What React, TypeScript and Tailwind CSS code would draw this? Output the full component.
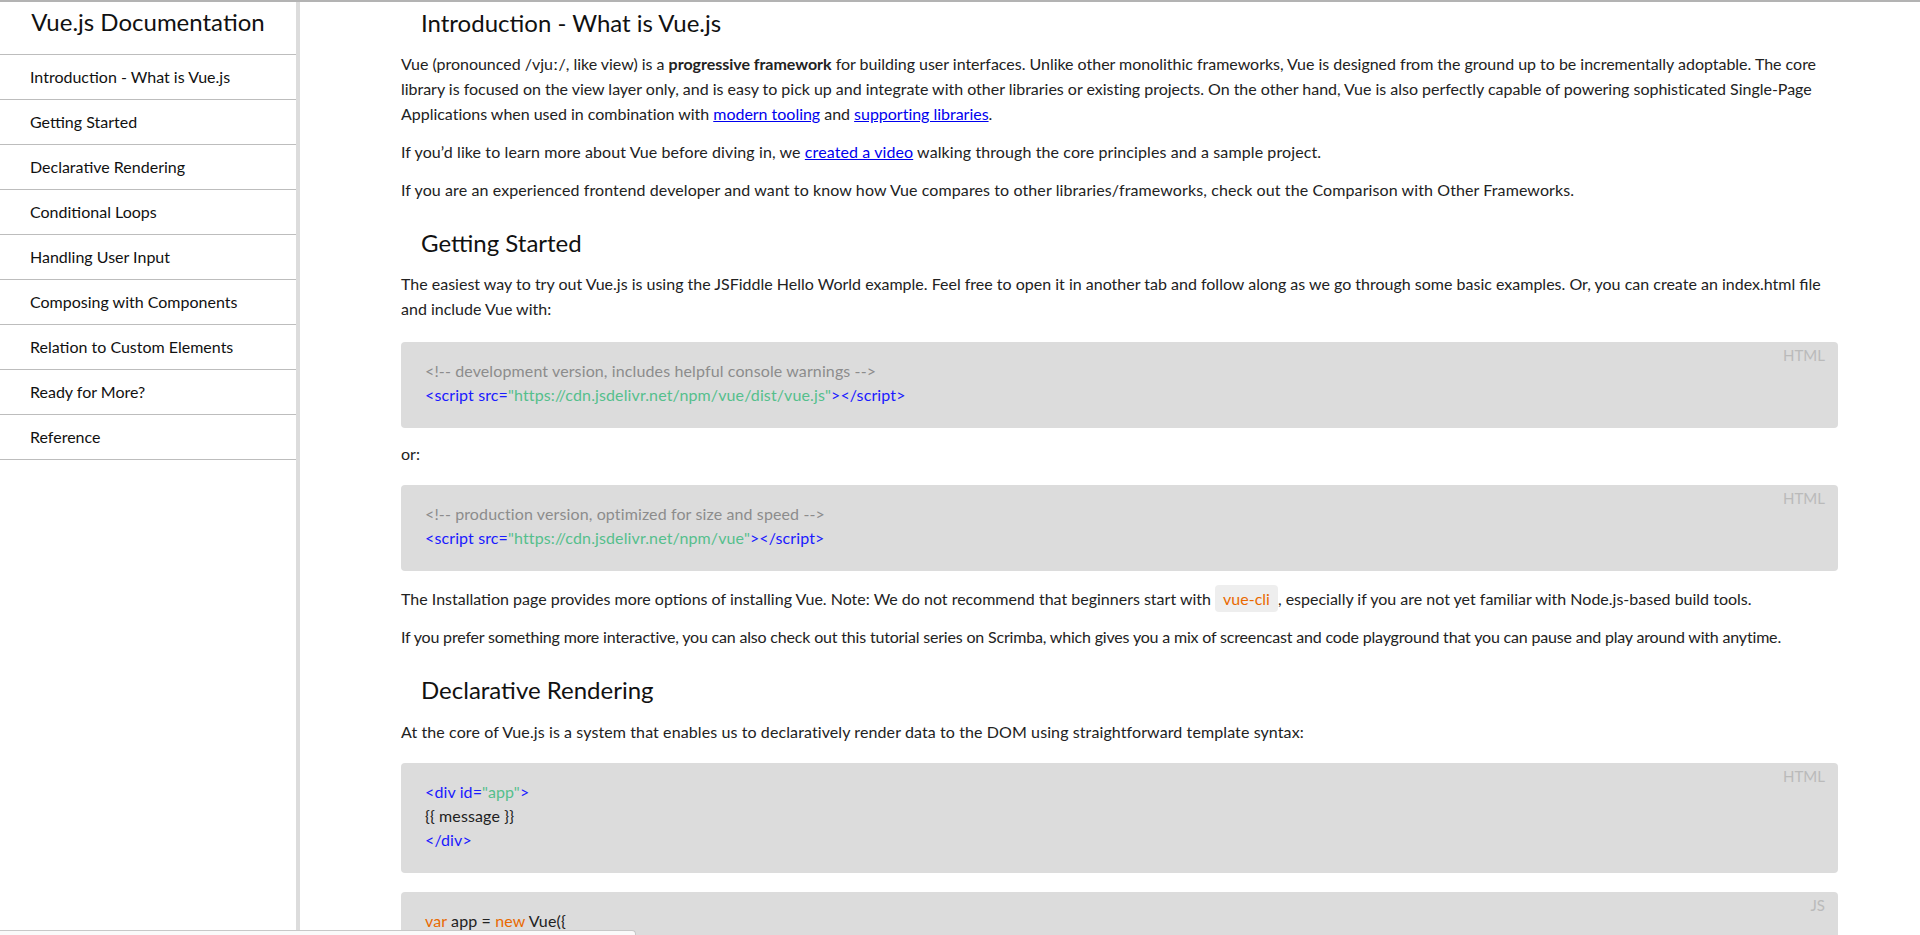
import React from 'react';

const navItems = [
  'Introduction - What is Vue.js',
  'Getting Started',
  'Declarative Rendering',
  'Conditional Loops',
  'Handling User Input',
  'Composing with Components',
  'Relation to Custom Elements',
  'Ready for More?',
  'Reference',
];

const font = { fontFamily: 'Lato, "Open Sans", sans-serif' };

function Tag({ children }: { children: React.ReactNode }) {
  return <span className="text-[#1a1aff]">{children}</span>;
}

function Str({ children }: { children: React.ReactNode }) {
  return <span className="text-[#55bf8c]">{children}</span>;
}

function Kw({ children }: { children: React.ReactNode }) {
  return <span className="text-[#e96900]">{children}</span>;
}

function CodeBlock({ lang, className = '', children }: { lang: string; className?: string; children: React.ReactNode }) {
  return (
    <div
      className={`relative rounded-[4px] bg-[#dcdcdc] pl-[24px] pr-4 pt-[17px] pb-[21px] text-[16px] leading-[24px] tracking-[0.12px] text-[#222] ${className}`}
    >
      <span className="absolute right-[13px] top-[4px] text-[15px] leading-[18px] tracking-normal text-[#bababa]">{lang}</span>
      {children}
    </div>
  );
}

function Heading({ children }: { children: React.ReactNode }) {
  return <h2 className="mt-[26px] pl-[20px] text-[24px] leading-[30px] text-[#111]">{children}</h2>;
}

function P({ children, className = '' }: { children: React.ReactNode; className?: string }) {
  return <p className={`text-[16px] leading-[25px] text-[#222] ${className}`}>{children}</p>;
}

function A({ children }: { children: React.ReactNode }) {
  return <a className="text-[#0000ee] underline">{children}</a>;
}

export default function App() {
  return (
    <div className="flex min-h-screen border-t-2 border-[#b3b3b3] bg-white" style={font}>
      {/* Sidebar */}
      <aside className="w-[300px] shrink-0 border-r-4 border-[#dcdcdc]">
        <div className="h-[53px] border-b border-[#bdbdbd] pt-[5px] text-center text-[24px] leading-[30px] text-[#111]">
          Vue.js Documentation
        </div>
        <ul>
          {navItems.map((item) => (
            <li
              key={item}
              className="flex h-[45px] items-center border-b border-[#bdbdbd] pl-[30px] text-[16px] text-[#111]"
            >
              {item}
            </li>
          ))}
        </ul>
      </aside>

      {/* Content */}
      <main className="flex-1 pl-[101px] pr-[82px] pb-10">
        <h1 className="mt-[6px] pl-[20px] text-[24px] leading-[30px] text-[#111]">Introduction - What is Vue.js</h1>
        <P className="mt-[13px] tracking-[-0.02px]">
          Vue (pronounced /vjuː/, like view) is a <strong className="font-bold">progressive framework</strong> for building user
          interfaces. Unlike other monolithic frameworks, Vue is designed from the ground up to be incrementally adoptable. The
          core library is focused on the view layer only, and is easy to pick up and integrate with other libraries or existing
          projects. On the other hand, Vue is also perfectly capable of powering sophisticated Single-Page Applications when used
          in combination with <A>modern tooling</A> and <A>supporting libraries</A>.
        </P>
        <P className="mt-[13px] tracking-[0.1px]">
          If you’d like to learn more about Vue before diving in, we <A>created a video</A> walking through the core principles
          and a sample project.
        </P>
        <P className="mt-[13px] tracking-[0.1px]">
          If you are an experienced frontend developer and want to know how Vue compares to other libraries/frameworks, check
          out the Comparison with Other Frameworks.
        </P>

        <Heading>Getting Started</Heading>
        <P className="mt-[13px]">
          The easiest way to try out Vue.js is using the JSFiddle Hello World example. Feel free to open it in another tab and
          follow along as we go through some basic examples. Or, you can create an index.html file and include Vue with:
        </P>
        <CodeBlock lang="HTML" className="mt-[21px]">
          <div className="text-[#8c8c8c]">&lt;!-- development version, includes helpful console warnings --&gt;</div>
          <div>
            <Tag>&lt;script src=</Tag>
            <Str>"https://cdn.jsdelivr.net/npm/vue/dist/vue.js"</Str>
            <Tag>&gt;&lt;/script&gt;</Tag>
          </div>
        </CodeBlock>
        <P className="mt-[13px]">or:</P>
        <CodeBlock lang="HTML" className="mt-[19px]">
          <div className="text-[#8c8c8c]">&lt;!-- production version, optimized for size and speed --&gt;</div>
          <div>
            <Tag>&lt;script src=</Tag>
            <Str>"https://cdn.jsdelivr.net/npm/vue"</Str>
            <Tag>&gt;&lt;/script&gt;</Tag>
          </div>
        </CodeBlock>
        <P className="mt-[15px]">
          The Installation page provides more options of installing Vue. Note: We do not recommend that beginners start with{' '}
          <code className="rounded-[4px] bg-[#eeeeee] px-[8px] py-[4px] text-[16px] text-[#e96900]" style={font}>
            vue-cli
          </code>
          , especially if you are not yet familiar with Node.js-based build tools.
        </P>
        <P className="mt-[13px] tracking-[-0.18px]">
          If you prefer something more interactive, you can also check out this tutorial series on Scrimba, which gives you a mix
          of screencast and code playground that you can pause and play around with anytime.
        </P>

        <Heading>Declarative Rendering</Heading>
        <P className="mt-[14px] tracking-[0.1px]">
          At the core of Vue.js is a system that enables us to declaratively render data to the DOM using straightforward
          template syntax:
        </P>
        <CodeBlock lang="HTML" className="mt-[19px]">
          <div>
            <Tag>&lt;div id=</Tag>
            <Str>"app"</Str>
            <Tag>&gt;</Tag>
          </div>
          <div>{'{{ message }}'}</div>
          <div>
            <Tag>&lt;/div&gt;</Tag>
          </div>
        </CodeBlock>
        <CodeBlock lang="JS" className="mt-[19px]">
          <div>
            <Kw>var</Kw> app = <Kw>new</Kw> Vue{'({'}
          </div>
          <div className="pl-[16px]">
            el: <Str>'#app'</Str>,
          </div>
          <div className="pl-[16px]">data: {'{'}</div>
          <div className="pl-[32px]">
            message: <Str>'Hello Vue!'</Str>
          </div>
          <div className="pl-[16px]">{'}'}</div>
          <div>{'})'}</div>
        </CodeBlock>
      </main>

      {/* bottom overlay bar */}
      <div className="fixed bottom-0 left-0 h-[5px] w-[636px] rounded-tr-[4px] border-t border-r border-[#c8c8c8] bg-[#fafafa]" />
    </div>
  );
}
